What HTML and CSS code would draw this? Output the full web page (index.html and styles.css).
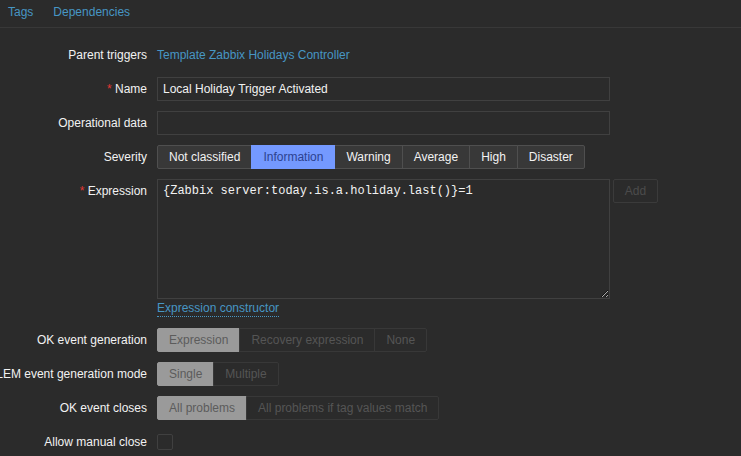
FILE: index.html
```html
<!DOCTYPE html>
<html lang="en">
<head>
<meta charset="utf-8">
<title>Trigger</title>
<link rel="stylesheet" href="styles.css">
</head>
<body>
<nav class="tabs">
  <a class="tab" href="#">Tags</a>
  <a class="tab" href="#">Dependencies</a>
</nav>
<form class="form">
  <div class="label">Parent triggers</div>
  <div class="field"><a class="link" href="#">Template Zabbix Holidays Controller</a></div>

  <div class="label"><span class="req">*</span>&nbsp;Name</div>
  <div class="field"><input class="input" type="text" readonly value="Local Holiday Trigger Activated"></div>

  <div class="label">Operational data</div>
  <div class="field"><input class="input" type="text" readonly value=""></div>

  <div class="label">Severity</div>
  <div class="field">
    <ul class="seg">
      <li class="seg-item">Not classified</li>
      <li class="seg-item seg-info">Information</li>
      <li class="seg-item">Warning</li>
      <li class="seg-item">Average</li>
      <li class="seg-item">High</li>
      <li class="seg-item">Disaster</li>
    </ul>
  </div>

  <div class="label label-top"><span class="req">*</span>&nbsp;Expression</div>
  <div class="field field-col">
    <div class="expr-row">
      <textarea class="expr" readonly>{Zabbix server:today.is.a.holiday.last()}=1</textarea>
      <button class="btn-add" type="button" disabled>Add</button>
    </div>
    <div class="constructor"><a class="link link-dotted" href="#">Expression constructor</a></div>
  </div>

  <div class="label">OK event generation</div>
  <div class="field">
    <ul class="seg seg-disabled">
      <li class="seg-item seg-on">Expression</li>
      <li class="seg-item">Recovery expression</li>
      <li class="seg-item">None</li>
    </ul>
  </div>

  <div class="label">PROBLEM event generation mode</div>
  <div class="field">
    <ul class="seg seg-disabled">
      <li class="seg-item seg-on">Single</li>
      <li class="seg-item">Multiple</li>
    </ul>
  </div>

  <div class="label">OK event closes</div>
  <div class="field">
    <ul class="seg seg-disabled">
      <li class="seg-item seg-on">All problems</li>
      <li class="seg-item">All problems if tag values match</li>
    </ul>
  </div>

  <div class="label">Allow manual close</div>
  <div class="field"><span class="checkbox"></span></div>
</form>
</body>
</html>
```

FILE: styles.css
```css
html, body {
  margin: 0;
  padding: 0;
  background: #2b2b2b;
  overflow: hidden;
}

body {
  font-family: "Liberation Sans", Arial, sans-serif;
  font-size: 12px;
  color: #f2f2f2;
}

.tabs {
  display: flex;
  gap: 20px;
  padding-left: 8px;
  height: 27px;
  border-bottom: 1px solid #383838;
}

.tab {
  color: #4796c4;
  text-decoration: none;
  line-height: 24px;
}

.form {
  display: grid;
  grid-template-columns: 147px 1fr;
  column-gap: 10px;
  row-gap: 10px;
  padding-top: 15px;
  margin: 0;
}

.label {
  height: 24px;
  display: flex;
  align-items: center;
  justify-content: flex-end;
  white-space: nowrap;
  min-width: 0;
}

.label-top {
  align-self: start;
}

.req {
  color: #e33734;
}

.field {
  min-height: 24px;
  display: flex;
  align-items: center;
}

.field-col {
  flex-direction: column;
  align-items: flex-start;
}

.link {
  color: #4796c4;
  text-decoration: none;
}

.input {
  box-sizing: border-box;
  width: 453px;
  height: 24px;
  margin: 0;
  padding: 0 5px;
  background: #2b2b2b;
  border: 1px solid #404040;
  color: #f2f2f2;
  font-family: "Liberation Sans", Arial, sans-serif;
  font-size: 12px;
  outline: none;
}

.seg {
  display: flex;
  list-style: none;
  margin: 0;
  padding: 0;
}

.seg-item {
  height: 24px;
  box-sizing: border-box;
  padding: 0 11px;
  line-height: 22px;
  border: 1px solid #4f4f4f;
  background: #383838;
  color: #f2f2f2;
  white-space: nowrap;
}

.seg-item + .seg-item {
  margin-left: -1px;
}

.seg-item:first-child {
  border-radius: 2px 0 0 2px;
}

.seg-item:last-child {
  border-radius: 0 2px 2px 0;
}

.seg-info {
  background: #7499ff;
  border-color: #7499ff;
  color: #2c4290;
  position: relative;
}

.seg-disabled .seg-item {
  background: #2b2b2b;
  border-color: #383838;
  color: #555555;
}

.seg-disabled .seg-on {
  background: #9a9a9a;
  border-color: #9a9a9a;
  color: #5c5c5c;
}

.expr-row {
  display: flex;
  align-items: flex-start;
  gap: 3px;
}

.expr {
  box-sizing: border-box;
  width: 453px;
  height: 120px;
  margin: 0;
  padding: 4px 5px;
  background: #2b2b2b;
  border: 1px solid #404040;
  color: #f2f2f2;
  font-family: "Liberation Mono", "Courier New", monospace;
  font-size: 12px;
  line-height: 14px;
  outline: none;
}

.btn-add {
  box-sizing: border-box;
  width: 45px;
  height: 24px;
  margin: 0;
  padding: 0;
  background: transparent;
  border: 1px solid #3b3b3b;
  border-radius: 2px;
  color: #4b4b4b;
  font-family: "Liberation Sans", Arial, sans-serif;
  font-size: 12px;
}

.constructor {
  padding: 2px 0 1px;
}

.link-dotted {
  display: inline-block;
  line-height: 15px;
  border-bottom: 1px dotted #4796c4;
}

.checkbox {
  display: block;
  box-sizing: border-box;
  width: 16px;
  height: 16px;
  border: 1px solid #404040;
  border-radius: 2px;
  background: #2b2b2b;
}
```
